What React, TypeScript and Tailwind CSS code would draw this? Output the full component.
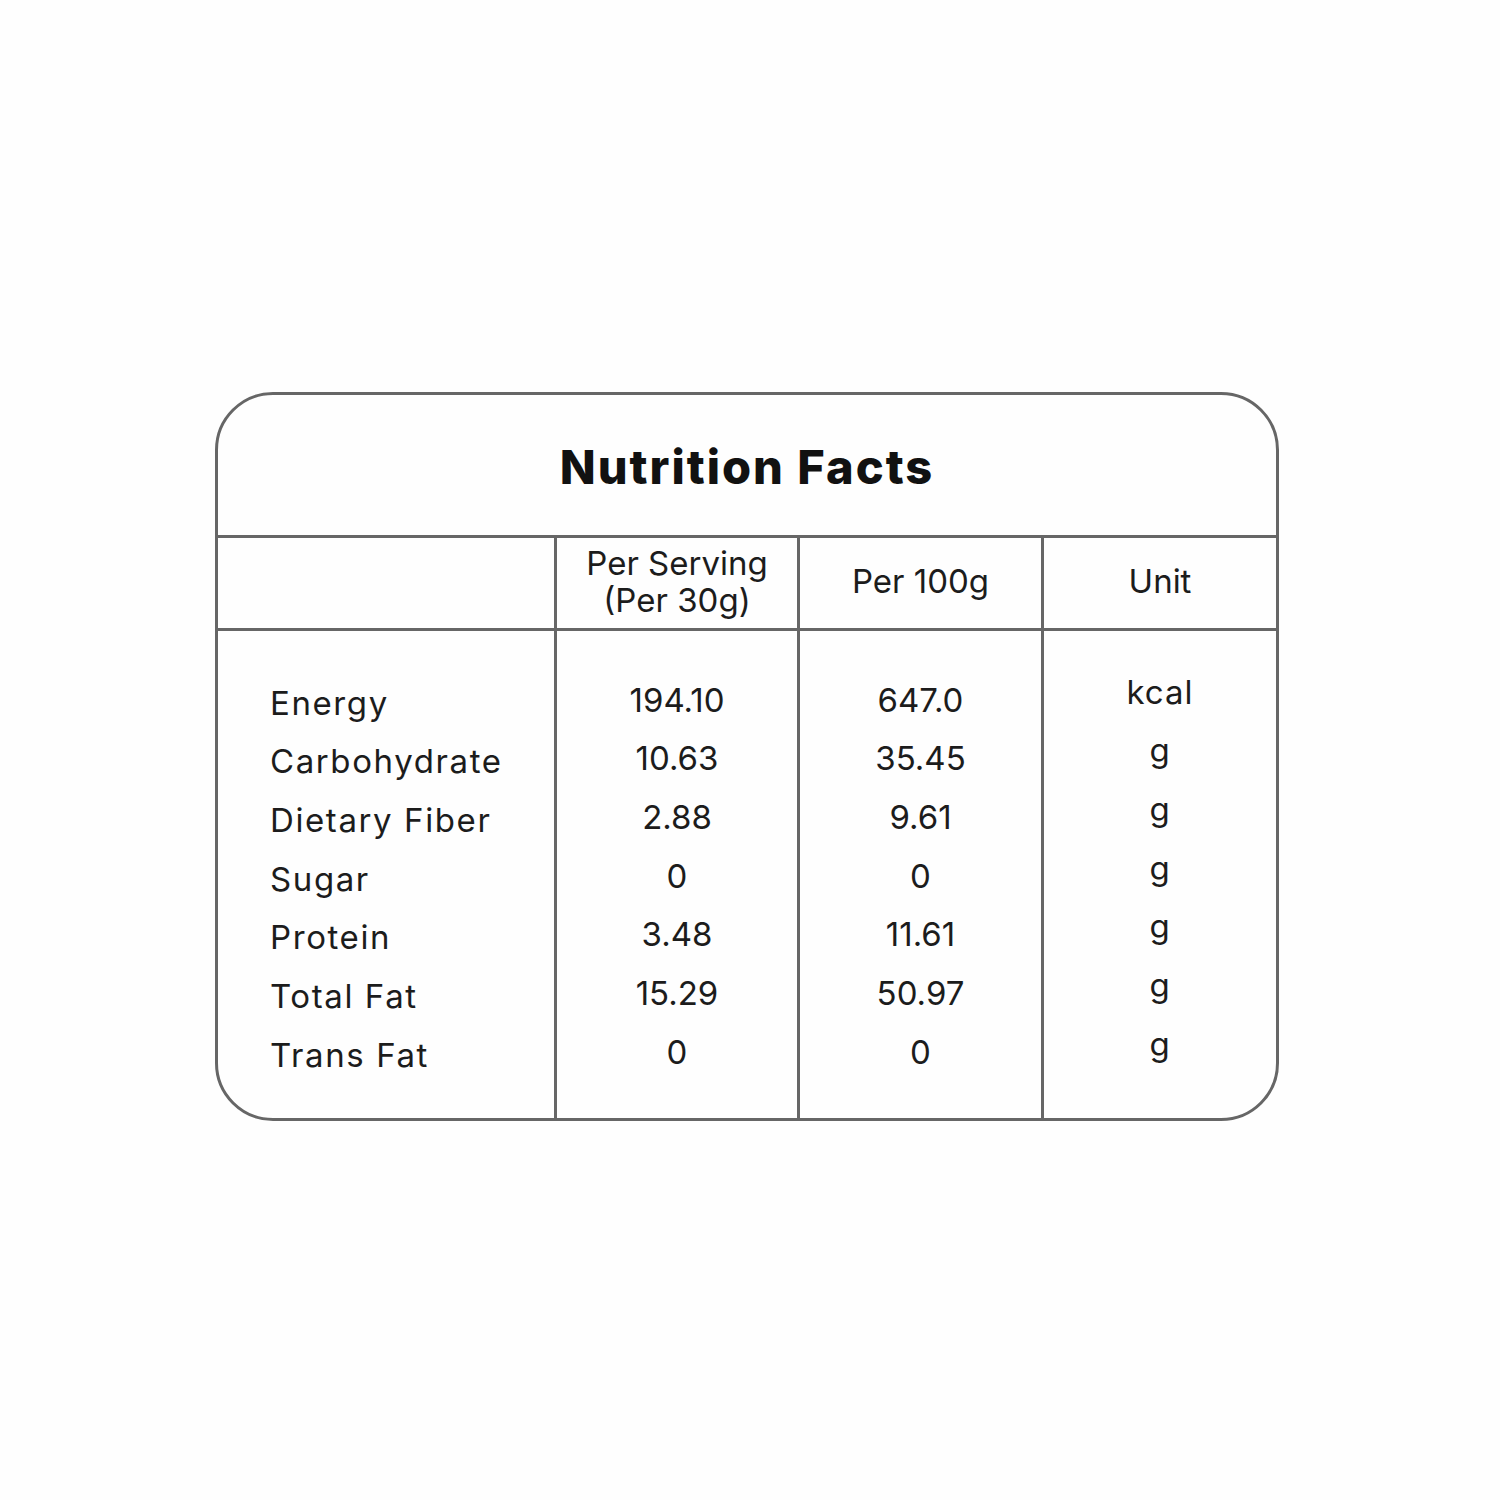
const rows = [
  { name: 'Energy', serving: '194.10', per100: '647.0', unit: 'kcal' },
  { name: 'Carbohydrate', serving: '10.63', per100: '35.45', unit: 'g' },
  { name: 'Dietary Fiber', serving: '2.88', per100: '9.61', unit: 'g' },
  { name: 'Sugar', serving: '0', per100: '0', unit: 'g' },
  { name: 'Protein', serving: '3.48', per100: '11.61', unit: 'g' },
  { name: 'Total Fat', serving: '15.29', per100: '50.97', unit: 'g' },
  { name: 'Trans Fat', serving: '0', per100: '0', unit: 'g' },
];

function NutritionCard() {
  return (
    <div className="ml-[215px] w-[1064px] border-[3px] border-[#666] rounded-[58px] overflow-hidden bg-[#fefefe]">
      <div className="h-[143px] flex items-center justify-center pt-[4px] border-b-[3px] border-[#666]">
        <h1 className="text-[47px] font-extrabold text-[#111] tracking-[2px]">Nutrition Facts</h1>
      </div>
      <div className="grid grid-cols-[339px_243px_244px_1fr] h-[93px] border-b-[3px] border-[#666] text-[33px] text-[#1c1c1c]">
        <div className="border-r-[3px] border-[#666]" />
        <div className="border-r-[3px] border-[#666] flex flex-col items-center justify-center leading-[37px] pb-[2px]">
          <span>Per Serving</span>
          <span>(Per 30g)</span>
        </div>
        <div className="border-r-[3px] border-[#666] flex items-center justify-center pb-[2px]">Per 100g</div>
        <div className="flex items-center justify-center pb-[2px]">Unit</div>
      </div>
      <div className="grid grid-cols-[339px_243px_244px_1fr] h-[487px] text-[33px] text-[#1c1c1c]">
        <div className="border-r-[3px] border-[#666] pt-[43px] pl-[52px] tracking-[1.6px]">
          {rows.map((r) => (
            <div key={r.name} className="h-[58.7px] flex items-center">
              {r.name}
            </div>
          ))}
        </div>
        <div className="border-r-[3px] border-[#666] pt-[40px] flex flex-col items-center">
          {rows.map((r) => (
            <div key={r.name} className="h-[58.7px] flex items-center">
              {r.serving}
            </div>
          ))}
        </div>
        <div className="border-r-[3px] border-[#666] pt-[40px] flex flex-col items-center">
          {rows.map((r) => (
            <div key={r.name} className="h-[58.7px] flex items-center">
              {r.per100}
            </div>
          ))}
        </div>
        <div className="pt-[32px] flex flex-col items-center tracking-[1px]">
          {rows.map((r) => (
            <div key={r.name} className="h-[58.7px] flex items-center">
              {r.unit}
            </div>
          ))}
        </div>
      </div>
    </div>
  );
}

export default function App() {
  return (
    <div className="w-[1500px] h-[1500px] bg-[#fefefe] pt-[392px] font-['Inter',sans-serif]">
      <NutritionCard />
    </div>
  );
}
